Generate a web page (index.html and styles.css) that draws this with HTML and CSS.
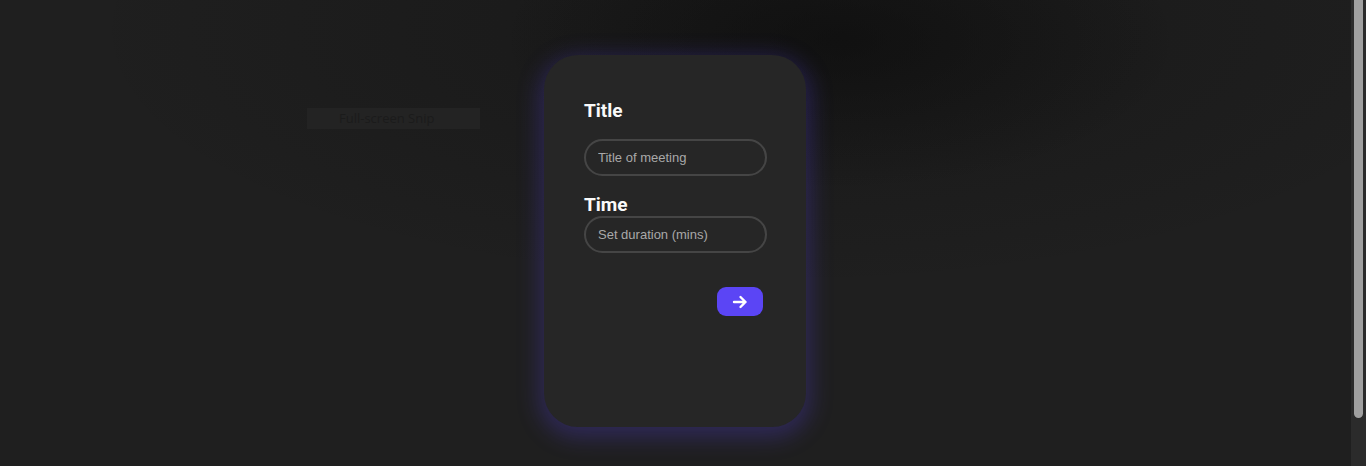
FILE: index.html
```html
<!DOCTYPE html>
<html lang="en">
<head>
<meta charset="utf-8">
<title>Meeting</title>
<link rel="stylesheet" href="styles.css">
</head>
<body>
<div class="snip">Full-screen Snip</div>
<main class="page">
  <form class="card">
    <label class="label" for="title">Title</label>
    <input class="field field-title" id="title" type="text" placeholder="Title of meeting">
    <label class="label label-time" for="time">Time</label>
    <input class="field" id="time" type="text" placeholder="Set duration (mins)">
    <div class="actions">
      <button class="go" type="button" aria-label="Next">
        <svg width="16" height="14" viewBox="0 0 16 14" fill="none" stroke="#fff" stroke-width="2.4" stroke-linecap="round" stroke-linejoin="round"><path d="M2 7h11.5M8.5 2l5 5-5 5"/></svg>
      </button>
    </div>
  </form>
</main>
<div class="scrollbar"><div class="thumb"></div></div>
</body>
</html>
```
FILE: styles.css
```css
html { background: #1f1f1f; }
body {
  margin: 0;
  height: 466px;
  overflow: hidden;
  font-family: "Liberation Sans", Arial, sans-serif;
  background:
    radial-gradient(ellipse 340px 150px at 840px 40px, rgba(10,10,10,0.55), rgba(10,10,10,0) 100%),
    radial-gradient(ellipse 700px 260px at 780px 30px, rgba(12,12,12,0.35), rgba(12,12,12,0) 100%),
    #1f1f1f;
  position: relative;
}
.scrollbar {
  position: absolute;
  top: 0;
  right: 0;
  width: 15px;
  height: 466px;
  background: #2b2b2b;
  box-sizing: border-box;
  padding: 0 3px;
}
.thumb {
  height: 418px;
  background: #a0a0a0;
  border-radius: 0 0 5px 5px;
}
.snip {
  position: absolute;
  left: 307px;
  top: 108px;
  width: 173px;
  height: 21px;
  box-sizing: border-box;
  padding-left: 32px;
  background: #232323;
  color: #1b1b1b;
  font-family: "Open Sans", sans-serif;
  font-size: 13px;
  line-height: 21px;
}
.page {
  width: 1350px;
  display: flex;
  justify-content: center;
  padding-top: 55px;
}
.card {
  width: 262px;
  height: 372px;
  box-sizing: border-box;
  padding: 46px 39px 0 40px;
  background: #262626;
  border-radius: 34px;
  box-shadow: 0 6px 22px 5px rgba(78, 60, 200, 0.33);
  display: flex;
  flex-direction: column;
}
.label {
  font-family: Roboto, "Liberation Sans", sans-serif;
  font-weight: 700;
  font-size: 19px;
  line-height: 24px;
  color: #fafafa;
  margin-top: -2px;
}
.label-time { margin-top: 0; margin-bottom: -1px; }
.field {
  width: 183px;
  height: 37px;
  box-sizing: border-box;
  border: 2px solid #454545;
  border-radius: 19px;
  background: transparent;
  padding: 0 12px;
  font-family: "Liberation Sans", Arial, sans-serif;
  font-size: 13px;
  color: #ddd;
  outline: none;
}
.field::placeholder { color: #a9a9a9; }
.field-title { margin-top: 16px; margin-bottom: 17px; }
.actions {
  display: flex;
  justify-content: flex-end;
  padding-right: 4px;
  margin-top: 34px;
}
.go {
  width: 46px;
  height: 29px;
  border: 0;
  border-radius: 9px;
  background: #5b45f5;
  display: flex;
  align-items: center;
  justify-content: center;
  padding: 0;
  cursor: pointer;
}
```
